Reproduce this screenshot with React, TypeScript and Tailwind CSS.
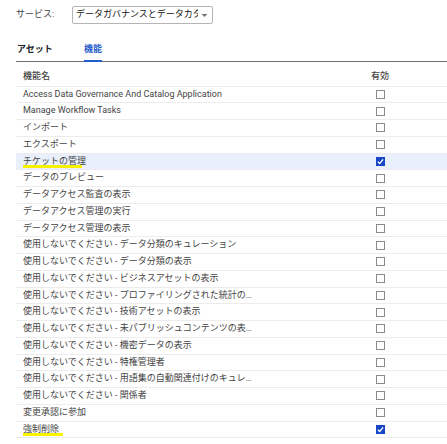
import React from "react";

// 機能一覧の行データ
const rows: { name: string; checked: boolean; selected?: boolean; mark?: boolean }[] = [
  { name: "Access Data Governance And Catalog Application", checked: false },
  { name: "Manage Workflow Tasks", checked: false },
  { name: "インポート", checked: false },
  { name: "エクスポート", checked: false },
  { name: "チケットの管理", checked: true, selected: true, mark: true },
  { name: "データのプレビュー", checked: false },
  { name: "データアクセス監査の表示", checked: false },
  { name: "データアクセス管理の実行", checked: false },
  { name: "データアクセス管理の表示", checked: false },
  { name: "使用しないでください - データ分類のキュレーション", checked: false },
  { name: "使用しないでください - データ分類の表示", checked: false },
  { name: "使用しないでください - ビジネスアセットの表示", checked: false },
  { name: "使用しないでください - プロファイリングされた統計の表示", checked: false },
  { name: "使用しないでください - 技術アセットの表示", checked: false },
  { name: "使用しないでください - 未パブリッシュコンテンツの表示", checked: false },
  { name: "使用しないでください - 機密データの表示", checked: false },
  { name: "使用しないでください - 特権管理者", checked: false },
  { name: "使用しないでください - 用語集の自動関連付けのキュレーション", checked: false },
  { name: "使用しないでください - 関係者", checked: false },
  { name: "変更承認に参加", checked: false },
  { name: "強制削除", checked: true, mark: true },
];

const Checkbox = ({ checked }: { checked: boolean }) =>
  checked ? (
    <span className="flex h-[9px] w-[9px] items-center justify-center bg-[#1747c4]">
      <svg width="7" height="7" viewBox="0 0 8 8">
        <path d="M1 4.2 L3.1 6.2 L7 1.6" fill="none" stroke="white" strokeWidth="1.6" />
      </svg>
    </span>
  ) : (
    <span className="block h-[9px] w-[9px] border border-[#8a8a8a] bg-white" />
  );

export default function App() {
  return (
    <div
      className="h-[444px] w-[447px] overflow-hidden bg-white text-[9px] text-[#333]"
      style={{ fontFamily: "Roboto, 'Noto Sans CJK JP', sans-serif" }}
    >
      {/* サービス選択 */}
      <div className="flex h-[30px] items-center pl-4">
        <span className="w-[56px] text-[#444]">サービス:</span>
        <div className="flex h-[18px] w-[141px] items-center rounded-[2px] border border-[#b5b5b5] pl-[3px] pr-[4px]">
          <span className="flex-1 overflow-hidden whitespace-nowrap text-[9px] text-[#111]">
            データガバナンスとデータカタログ
          </span>
          <svg width="7" height="5" viewBox="0 0 7 5" className="ml-[3px]">
            <path d="M0.5 1 L6.5 1 L3.5 4 Z" fill="#777" />
          </svg>
        </div>
      </div>

      {/* タブ */}
      <div className="ml-4 flex h-[31.5px] items-end border-b-[1.5px] border-[#6f6f6f]">
        <div className="w-[68px] pb-[4px] pl-[1px] font-bold text-[#222]">アセット</div>
        <div className="relative pb-[4px] font-bold text-[#1f5ccc]">
          機能
          <span className="absolute bottom-[-1px] left-0 right-0 h-[2px] bg-[#1f5ccc]" />
        </div>
      </div>

      {/* テーブル */}
      <div className="ml-4">
        <div className="flex h-[25px] items-end border-b-[1.5px] border-[#ececec] pb-[2px]">
          <div className="flex-1 pl-[7px] font-medium text-[#444]">機能名</div>
          <div className="w-[50px] text-center font-medium text-[#444]">有効</div>
          <div className="w-[42px]" />
        </div>
        {rows.map((row) => (
          <div
            key={row.name}
            className={`flex h-[16.75px] items-center border-b-[1.5px] border-[#ececec] ${
              row.selected ? "bg-[#e9f0fb]" : ""
            }`}
          >
            <div className="min-w-0 flex-1 pl-[7px]">
              <span className="relative block max-w-[229px] truncate text-[#444]">
                {row.mark && (
                  <span
                    className={`absolute bottom-[0px] h-[3px] bg-[#f6f200] ${
                      row.checked && !row.selected ? "-left-[5px] w-[45px]" : "left-0 w-[59px]"
                    }`}
                  />
                )}
                <span className="relative">{row.name}</span>
              </span>
            </div>
            <div className="flex w-[50px] justify-center">
              <Checkbox checked={row.checked} />
            </div>
            <div className="w-[42px]" />
          </div>
        ))}
      </div>
    </div>
  );
}
